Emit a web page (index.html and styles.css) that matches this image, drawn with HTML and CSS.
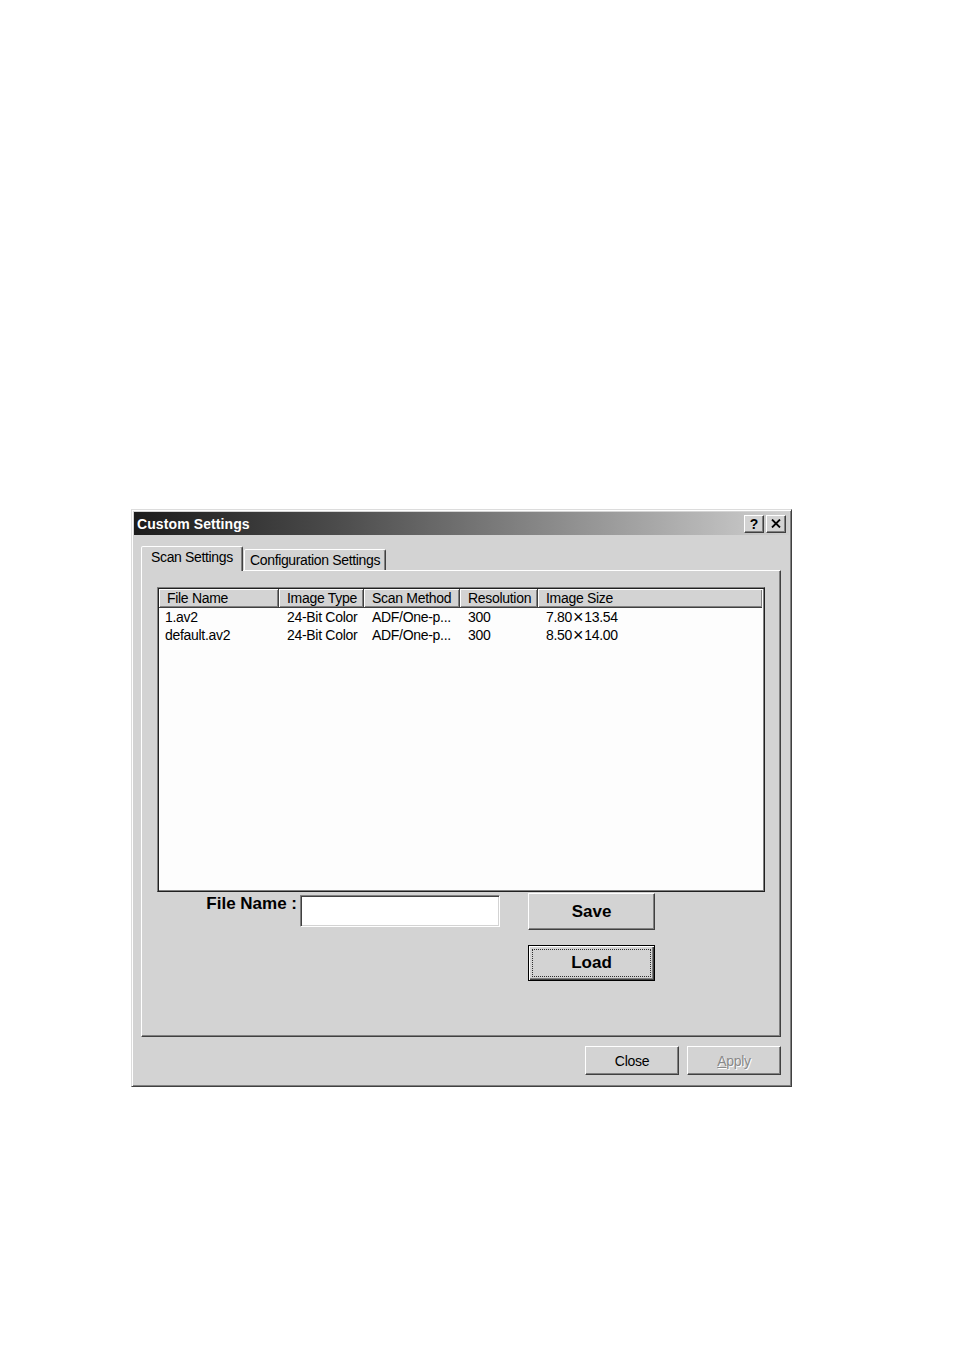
FILE: index.html
```html
<!DOCTYPE html>
<html>
<head>
<meta charset="utf-8">
<link rel="stylesheet" href="styles.css">
</head>
<body>
<div class="page">
  <div class="window">
    <div class="titlebar">
      <span class="title">Custom Settings</span>
      <div class="title-btns">
        <span class="tbtn q">?</span>
        <span class="tbtn x"><svg width="10" height="9" viewBox="0 0 10 9"><path d="M1 0.5 L9 8.5 M9 0.5 L1 8.5" stroke="#000" stroke-width="1.8"/></svg></span>
      </div>
    </div>
    <div class="wbody">
      <div class="tabs">
        <div class="tab active">Scan Settings</div>
        <div class="tab">Configuration Settings</div>
      </div>
      <div class="panel">
        <div class="list">
          <div class="lrow head">
            <div class="c c1">File Name</div>
            <div class="c c2">Image Type</div>
            <div class="c c3">Scan Method</div>
            <div class="c c4">Resolution</div>
            <div class="c c5">Image Size</div>
          </div>
          <div class="lrow item">
            <div class="c c1">1.av2</div>
            <div class="c c2">24-Bit Color</div>
            <div class="c c3">ADF/One-p...</div>
            <div class="c c4">300</div>
            <div class="c c5">7.80<span class="times">×</span>13.54</div>
          </div>
          <div class="lrow item">
            <div class="c c1">default.av2</div>
            <div class="c c2">24-Bit Color</div>
            <div class="c c3">ADF/One-p...</div>
            <div class="c c4">300</div>
            <div class="c c5">8.50<span class="times">×</span>14.00</div>
          </div>
        </div>
        <div class="form">
          <label class="flabel">File Name :</label>
          <div class="finput"></div>
          <div class="fbtns">
            <div class="btn big">Save</div>
            <div class="btn big default"><span class="focus">Load</span></div>
          </div>
        </div>
      </div>
      <div class="bottom">
        <div class="btn small">Close</div>
        <div class="btn small disabled"><u>A</u>pply</div>
      </div>
    </div>
  </div>
</div>
</body>
</html>
```

FILE: styles.css
```css
* { box-sizing: border-box; }
html, body { margin: 0; padding: 0; background: #fff; }
body { font-family: "Liberation Sans", Arial, sans-serif; color: #000; }

.page { padding: 509px 0 0 131px; }

.window {
  width: 661px;
  height: 578px;
  background: #d3d3d3;
  border: 1px solid;
  border-color: #dcdcdc #404040 #404040 #dcdcdc;
  box-shadow: inset 1px 1px #fff, inset -1px -1px #808080;
  padding: 2px;
  display: flex;
  flex-direction: column;
}

.titlebar {
  height: 23px;
  background: linear-gradient(to right, #1c1c1c 0%, #4a4a4a 30%, #cfcfcf 100%);
  display: flex;
  align-items: center;
  justify-content: space-between;
  padding: 0 3px 0 3px;
}
.title {
  color: #fff;
  font-weight: bold;
  font-size: 14px;
  letter-spacing: 0.1px;
}
.title-btns { display: flex; gap: 2px; }
.tbtn {
  width: 20px;
  height: 18px;
  background: #d3d3d3;
  border: 1px solid;
  border-color: #fff #404040 #404040 #fff;
  box-shadow: inset -1px -1px #808080;
  display: flex;
  align-items: center;
  justify-content: center;
  font-weight: bold;
  font-size: 14px;
  line-height: 1;
}

.wbody {
  flex: 1;
  padding: 11px 8px 0 7px;
  display: flex;
  flex-direction: column;
}

.tabs {
  height: 24px;
  display: flex;
  align-items: flex-end;
}
.tab {
  height: 21px;
  padding: 0 6px 0 5px;
  font-size: 14px;
  letter-spacing: -0.35px;
  line-height: 20px;
  white-space: nowrap;
  background: #d3d3d3;
  border: 1px solid;
  border-bottom: none;
  border-color: #fff #404040 transparent #fff;
  box-shadow: inset -1px 0 #808080;
  border-radius: 2px 2px 0 0;
}
.tab.active {
  width: 102px;
  height: 25px;
  margin-bottom: -1px;
  padding: 0 0 0 9px;
  line-height: 20px;
  position: relative;
  z-index: 1;
  border-right: 1px solid #404040;
}
.tab:not(.active) { width: 142px; margin-left: 1px; }

.panel {
  height: 467px;
  border: 1px solid;
  border-color: #fff #404040 #404040 #fff;
  box-shadow: inset -1px -1px #808080;
  padding: 16px 15px 0 15px;
}

.list {
  height: 305px;
  background: #fdfdfd;
  border: 1px solid;
  border-color: #808080 #202020 #202020 #808080;
  box-shadow: inset 1px 1px #202020, inset -1px -1px #808080;
  padding: 1px 2px 2px 1px;
  font-size: 14px;
  letter-spacing: -0.3px;
}
.lrow {
  display: grid;
  grid-template-columns: 120px 85px 96px 78px 1fr;
}
.head { height: 19px; }
.head .c {
  background: #d3d3d3;
  border-right: 1px solid #404040;
  border-bottom: 1px solid #404040;
  box-shadow: inset 1px 1px #fff, inset -1px -1px #808080;
  padding-left: 8px;
  line-height: 18px;
  white-space: nowrap;
  overflow: hidden;
}
.head .c5 { border-right: none; }
.item { height: 18px; line-height: 18px; }
.item .c { padding-left: 8px; white-space: nowrap; }
.item .c1 { padding-left: 6px; }
.times {
  font-size: 18px;
  line-height: 0;
  vertical-align: -1px;
  padding: 0 1px;
}

.form {
  display: grid;
  grid-template-columns: 155px 203px 155px;
  column-gap: 0;
  margin-top: 1px;
  margin-left: -15px;
}
.flabel {
  font-size: 17px;
  font-weight: bold;
  text-align: right;
  line-height: 20px;
  margin-top: 1px;
  padding-right: 0;
}
.finput {
  margin-left: 3px;
  margin-top: 2px;
  width: 200px;
  height: 32px;
  background: #fff;
  border: 1px solid;
  border-color: #808080 #fff #fff #808080;
  box-shadow: inset 1px 1px #404040, inset -1px -1px #d3d3d3;
}
.fbtns {
  margin-left: 28px;
  width: 127px;
  display: flex;
  flex-direction: column;
  gap: 15px;
}

.btn {
  background: #d3d3d3;
  border: 1px solid;
  border-color: #fff #404040 #404040 #fff;
  box-shadow: inset -1px -1px #808080;
  display: flex;
  align-items: center;
  justify-content: center;
}
.btn.big {
  width: 127px;
  height: 37px;
  font-size: 17px;
  font-weight: bold;
}
.btn.default {
  height: 36px;
  border: 1px solid #000;
  box-shadow: inset 1px 1px #fff, inset -1px -1px #404040, inset -2px -2px #808080;
  padding: 3px;
}
.focus {
  width: 100%;
  height: 100%;
  border: 1px dotted #303030;
  display: flex;
  align-items: center;
  justify-content: center;
}

.bottom {
  margin-top: 9px;
  display: flex;
  justify-content: flex-end;
  gap: 8px;
}
.btn.small {
  width: 94px;
  height: 29px;
  font-size: 14px;
  letter-spacing: -0.3px;
}
.btn.disabled {
  color: #8a8a8a;
  text-shadow: 1px 1px #fff;
}
```
